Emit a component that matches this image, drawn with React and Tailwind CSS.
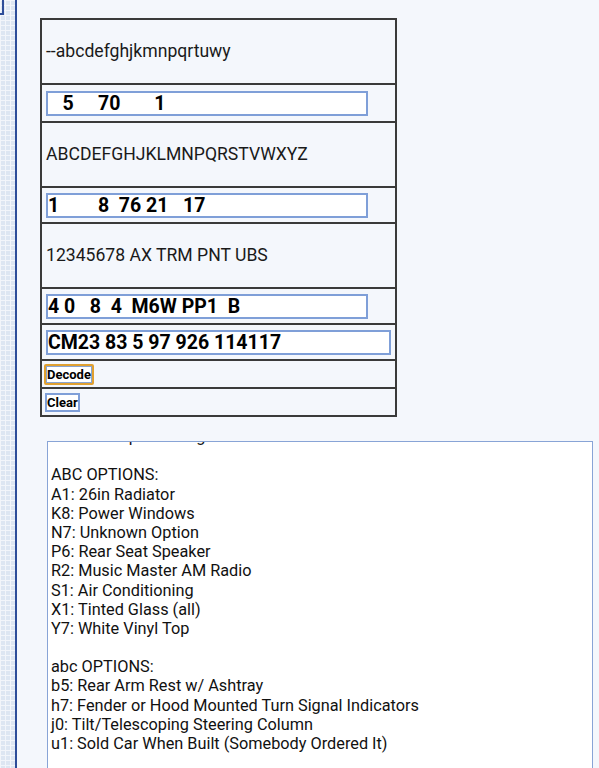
import { useState } from "react";

const inputRows = {
  a: "   5     70       1",
  b: "1        8  76 21   17",
  c: "4 0   8  4  M6W PP1  B",
  d: "CM23 83 5 97 926 114117",
};

const output = [
  "Interiors: Spruce Beige",
  "",
  "ABC OPTIONS:",
  "A1: 26in Radiator",
  "K8: Power Windows",
  "N7: Unknown Option",
  "P6: Rear Seat Speaker",
  "R2: Music Master AM Radio",
  "S1: Air Conditioning",
  "X1: Tinted Glass (all)",
  "Y7: White Vinyl Top",
  "",
  "abc OPTIONS:",
  "b5: Rear Arm Rest w/ Ashtray",
  "h7: Fender or Hood Mounted Turn Signal Indicators",
  "j0: Tilt/Telescoping Steering Column",
  "u1: Sold Car When Built (Somebody Ordered It)",
  "",
  "",
];

const Field = ({ value, wide }) => (
  <input
    readOnly
    value={value}
    className={`${wide ? "w-[345px]" : "w-[322px]"} h-[25px] border-2 border-[#7f9fd8] bg-white px-0 text-[19.5px] font-bold leading-none text-black outline-none`}
  />
);

const TextRow = ({ children }) => (
  <div className="flex h-[65px] items-center border-b-2 border-[#3a3a3a] px-[4px] text-[17.6px] text-[#1a1a1a]">
    {children}
  </div>
);

const InputRow = ({ children, h }) => (
  <div className={`flex ${h} items-center border-b-2 border-[#3a3a3a] pl-[4px]`}>{children}</div>
);

export default function App() {
  const [rows] = useState(inputRows);

  return (
    <div className="flex min-h-[768px] bg-[#f4f7fc] font-['Roboto',sans-serif]">
      <div className="relative w-[17px] shrink-0 border-r-2 border-[#2d4d99] bg-[#dde6f2] bg-[image:linear-gradient(90deg,#f2f5fa_1px,transparent_1px),linear-gradient(#f2f5fa_1px,transparent_1px)] bg-[size:5px_5px]">
        <div className="h-[15px] w-[4px] border-r-2 border-b-2 border-[#2d4d99]" />
      </div>

      <div className="flex flex-col pl-[23px] pt-[18px]">
        <div className="flex w-[357px] flex-col border-x-2 border-t-2 border-[#3a3a3a]">
          <TextRow>--abcdefghjkmnpqrtuwy</TextRow>
          <InputRow h="h-[38px]">
            <Field value={rows.a} />
          </InputRow>
          <TextRow>ABCDEFGHJKLMNPQRSTVWXYZ</TextRow>
          <InputRow h="h-[36px]">
            <Field value={rows.b} />
          </InputRow>
          <TextRow>12345678 AX TRM PNT UBS</TextRow>
          <InputRow h="h-[36px]">
            <Field value={rows.c} />
          </InputRow>
          <InputRow h="h-[36px]">
            <Field value={rows.d} wide />
          </InputRow>
          <div className="flex h-[28px] items-center border-b-2 border-[#3a3a3a] pl-[2px]">
            <button className="h-[21px] rounded-[2px] border-2 border-[#e0a030] bg-white p-0 text-[13px] font-bold leading-none text-black">
              <span className="flex h-full items-center border border-[#8aa4cf] px-0">Decode</span>
            </button>
          </div>
          <div className="flex h-[28px] items-center border-b-2 border-[#3a3a3a] pl-[3px]">
            <button className="h-[19px] border-2 border-[#7f9fd8] bg-white px-0 text-[13px] font-bold leading-none text-black">
              Clear
            </button>
          </div>
        </div>

        <div className="mt-[24px] ml-[7px] h-[340px] w-[546px] overflow-hidden border border-[#88a4d6] bg-white px-[3px]">
          <div className="-mt-[15px] whitespace-pre text-[16.3px] leading-[19.2px] text-[#111]">
            {output.map((line, i) => (
              <div key={i} className="h-[19.2px]">
                {line}
              </div>
            ))}
          </div>
        </div>
      </div>
    </div>
  );
}
